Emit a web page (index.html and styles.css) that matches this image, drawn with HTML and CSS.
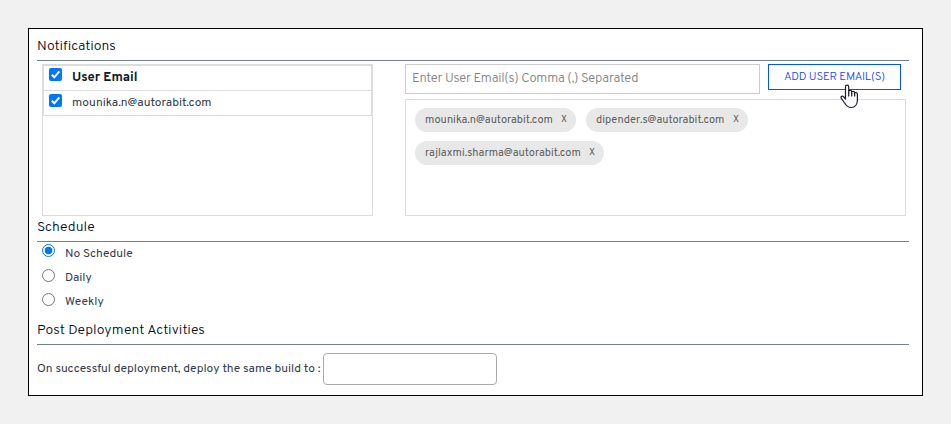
FILE: index.html
```html
<!DOCTYPE html>
<html lang="en">
<head>
<meta charset="utf-8">
<title>Notifications</title>
<link rel="stylesheet" href="styles.css">
</head>
<body>
<main class="panel">
  <h2 class="heading heading-notify"><span>Notifications</span></h2>
  <section class="notify">
    <div class="users">
      <div class="user-table">
        <label class="user-row user-head"><span class="check"><svg viewBox="0 0 13 13"><path d="M2.8 6.8 5.3 9.3 10.3 3.3"/></svg></span><span>User Email</span></label>
        <label class="user-row"><span class="check"><svg viewBox="0 0 13 13"><path d="M2.8 6.8 5.3 9.3 10.3 3.3"/></svg></span><span class="mail">mounika.n@autorabit.com</span></label>
      </div>
    </div>
    <div class="emails">
      <div class="entry">
        <div class="email-input"><span>Enter User Email(s) Comma (,) Separated</span></div>
        <div class="add-button"><span>ADD USER EMAIL(S)</span>
          <svg class="pointer" viewBox="0 0 19 25"><path d="M5.5 15.2V2.8C5.5.6 8.7.6 8.7 2.8V9.2 7.6C8.7 5.9 11.7 5.9 11.7 7.8V9.5 8.5C11.7 6.9 14.6 7 14.6 8.8V10.3 9.6C14.6 8.2 17.4 8.4 17.4 10.3V16C17.4 20.5 15 23.5 11.2 23.5 7.6 23.5 6.2 21.8 4.6 19L1.2 14.2C.2 12.5 2.4 11.4 3.7 12.9Z"/><path d="M8.7 9v3.5M11.7 9v3.5M14.6 10v2.5"/></svg>
        </div>
      </div>
      <div class="chips">
        <div class="chip"><span class="chip-text chip-a">mounika.n@autorabit.com</span><span class="x">X</span></div>
        <div class="chip"><span class="chip-text chip-b">dipender.s@autorabit.com</span><span class="x">X</span></div>
        <div class="chip"><span class="chip-text chip-c">rajlaxmi.sharma@autorabit.com</span><span class="x">X</span></div>
      </div>
    </div>
  </section>
  <h2 class="heading heading-schedule"><span>Schedule</span></h2>
  <section class="schedule">
    <label class="option"><span class="radio radio-on"></span><span>No Schedule</span></label>
    <label class="option"><span class="radio"></span><span>Daily</span></label>
    <label class="option"><span class="radio"></span><span>Weekly</span></label>
  </section>
  <h2 class="heading heading-post"><span>Post Deployment Activities</span></h2>
  <section class="post"><span>On successful deployment, deploy the same build to :</span><div class="build"></div></section>
</main>
</body>
</html>
```
FILE: styles.css
```css
* { box-sizing: border-box; }
body {
  margin: 0;
  padding: 28px;
  height: 424px;
  background: #f1f1f1;
  font: 12px/14px Overpass, Roboto, sans-serif;
  color: #333b4d;
}
.panel {
  width: 895px;
  height: 368px;
  padding: 0 13px 0 8px;
  background: #fff;
  border: 1px solid #000;
}
.heading {
  display: flex;
  align-items: flex-end;
  margin: 0;
  padding-bottom: 5px;
  border-bottom: 1px solid #708090;
  font-size: 14px;
  line-height: 16px;
  font-weight: 300;
  letter-spacing: .05px;
  color: #000a20;
}
.heading-notify { height: 32px; }
.heading-schedule { height: 26px; }
.heading-post { height: 38px; }
.notify { display: flex; gap: 32px; padding: 3px 0 0 5px; }
.users { width: 331px; height: 152px; border: 1px solid #dcdcdc; }
.user-table { border: 1px solid #dcdcdc; }
.user-row { display: flex; height: 25px; gap: 10px; padding: 3px 0 0 5px; line-height: 18px; color: #333b4d; }
.user-row + .user-row { border-top: 1px solid #dcdcdc; }
.user-head { height: 24px; padding-top: 2px; font-size: 13px; font-weight: 700; color: #111827; line-height: 20px; }
.check { display: block; width: 13px; height: 13px; border-radius: 2px; background: #0075ff; }
.check svg { display: block; width: 13px; height: 13px; fill: none; stroke: #fff; stroke-width: 2; }
.emails { width: 501px; }
.entry { display: flex; align-items: flex-start; gap: 8px; height: 35px; }
.email-input { width: 355px; height: 30px; padding: 6px; border: 1px solid #ccc; font-size: 13px; font-weight: 300; line-height: 16px; letter-spacing: -.24px; color: #808080; }
.add-button { position: relative; width: 133px; height: 26px; border: 1px solid #0055fe; color: #1144f5; text-align: center; font-size: 11.5px; line-height: 25px; font-weight: 300; letter-spacing: -.2px; }
.pointer { position: absolute; left: 71px; top: 19px; width: 19px; height: 25px; fill: #fff; stroke: #1c1c2b; stroke-width: 1.2; stroke-linejoin: round; }
.chips { display: flex; flex-wrap: wrap; align-content: flex-start; gap: 9px 10px; height: 117px; padding: 8px 9px; border: 1px solid #dcdcdc; }
.chip { display: flex; height: 24px; padding: 0 3px 0 10px; border-radius: 12px; background: #e8e8e8; color: #606060; font-size: 11px; line-height: 25px; }
.chip-text { width: 128px; white-space: nowrap; }
.chip-b { width: 129px; }
.chip-c { width: 156px; }
.x { width: 20px; padding-left: 8px; line-height: 24px; font-size: 10px; }
.schedule { height: 65px; padding: 2px 0 0 5px; }
.option { display: flex; gap: 10px; height: 24px; line-height: 18px; }
.option:first-child { height: 25px; line-height: 20px; }
.radio { width: 13px; height: 13px; border: 1px solid #767676; border-radius: 50%; }
.radio-on { border-color: #0075ff; background: radial-gradient(circle, #0075ff 3.5px, #fff 4.2px); }
.post { display: flex; align-items: center; padding-top: 8px; height: 40px; }
.post > span { width: 286px; white-space: nowrap; }
.build { width: 174px; height: 32px; border: 1px solid #aaa; border-radius: 4px; }
```
